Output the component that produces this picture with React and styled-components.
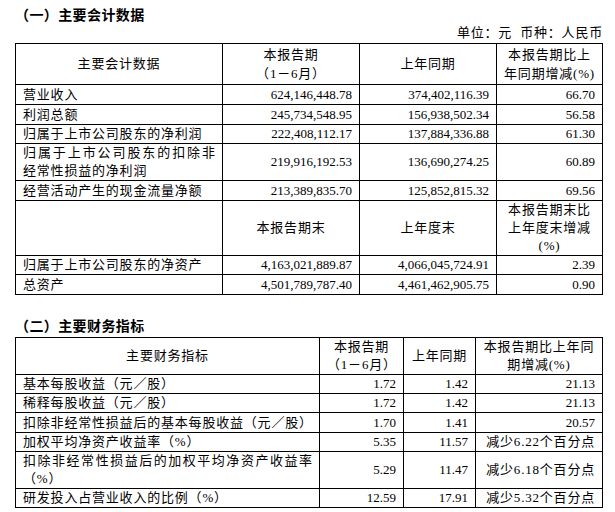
import React from "react";
import styled, { createGlobalStyle } from "styled-components";

const GlobalStyle = createGlobalStyle`
  html, body { margin: 0; padding: 0; background: #fff; }
  body { font-family: "Liberation Serif", "Noto Sans CJK SC", serif; color: #000; }
`;

const Page = styled.div`
  width: 587px;
  padding: 4px 0 0 15px;
`;

const SectionTitle = styled.h2`
  margin: ${(p) => p.$mt || 0}px 0 0 0;
  height: 20px;
  line-height: 20px;
  font-family: "Noto Sans CJK SC", sans-serif;
  font-weight: 700;
  font-size: 14px;
  letter-spacing: 0.4px;
  color: #000;
`;

const UnitLine = styled.div`
  height: 18px;
  line-height: 18px;
  text-align: right;
  font-family: "Liberation Serif", "Noto Sans CJK SC", serif;
  font-size: 13px;
  letter-spacing: 0.8px;
  margin-right: -1px;
`;

const Table = styled.table`
  width: 587px;
  margin-top: ${(p) => p.$mt || 0}px;
  border-collapse: collapse;
  table-layout: fixed;
  font-family: "Liberation Serif", "Noto Sans CJK SC", serif;
  font-size: 13px;
`;

const Row = styled.tr`
  height: ${(p) => p.$h}px;
`;

const Cell = styled.td`
  border: 1px solid #000;
  padding: 0 7px;
  vertical-align: middle;
  line-height: ${(p) => p.$lh || 18}px;
  text-align: ${(p) => p.$align || "left"};
  letter-spacing: ${(p) => (p.$num ? "0" : "0.8px")};
  white-space: nowrap;
  overflow: hidden;
  color: #000;
`;

const JustLine = styled.span`
  display: block;
  text-align: justify;
  text-align-last: justify;
  letter-spacing: 0;
`;

const Line = styled.span`
  display: block;
`;

const t1Rows = [
  { label: "营业收入", a: "624,146,448.78", b: "374,402,116.39", c: "66.70", h: 20 },
  { label: "利润总额", a: "245,734,548.95", b: "156,938,502.34", c: "56.58", h: 20 },
  { label: "归属于上市公司股东的净利润", a: "222,408,112.17", b: "137,884,336.88", c: "61.30", h: 19 },
  {
    label: ["归属于上市公司股东的扣除非", "经常性损益的净利润"],
    a: "219,916,192.53",
    b: "136,690,274.25",
    c: "60.89",
    h: 37,
  },
  { label: "经营活动产生的现金流量净额", a: "213,389,835.70", b: "125,852,815.32", c: "69.56", h: 20 },
];

const t1Rows2 = [
  { label: "归属于上市公司股东的净资产", a: "4,163,021,889.87", b: "4,066,045,724.91", c: "2.39", h: 19 },
  { label: "总资产", a: "4,501,789,787.40", b: "4,461,462,905.75", c: "0.90", h: 20 },
];

const t2Rows = [
  { label: "基本每股收益（元／股）", a: "1.72", b: "1.42", c: "21.13", h: 19 },
  { label: "稀释每股收益（元／股）", a: "1.72", b: "1.42", c: "21.13", h: 19 },
  { label: "扣除非经常性损益后的基本每股收益（元／股）", a: "1.70", b: "1.41", c: "20.57", h: 20 },
  { label: "加权平均净资产收益率（%）", a: "5.35", b: "11.57", c: "减少6.22个百分点", h: 18 },
  {
    label: ["扣除非经常性损益后的加权平均净资产收益率", "（%）"],
    a: "5.29",
    b: "11.47",
    c: "减少6.18个百分点",
    h: 37,
  },
  { label: "研发投入占营业收入的比例（%）", a: "12.59", b: "17.91", c: "减少5.32个百分点", h: 18 },
];

function Label({ value }) {
  if (Array.isArray(value)) {
    return (
      <>
        <JustLine>{value[0]}</JustLine>
        <Line>{value[1]}</Line>
      </>
    );
  }
  return value;
}

function DataRow({ r }) {
  return (
    <Row $h={r.h}>
      <Cell>
        <Label value={r.label} />
      </Cell>
      <Cell $align="right" $num>{r.a}</Cell>
      <Cell $align="right" $num>{r.b}</Cell>
      <Cell $align="right" $num={!/[\u4e00-\u9fff]/.test(r.c)}>{r.c}</Cell>
    </Row>
  );
}

export default function App() {
  return (
    <>
      <GlobalStyle />
      <Page>
        <SectionTitle>（一）主要会计数据</SectionTitle>
        <UnitLine>单位：元&nbsp;&nbsp;币种：人民币</UnitLine>
        <Table $mt={1}>
          <colgroup>
            <col style={{ width: 207 }} />
            <col style={{ width: 137 }} />
            <col style={{ width: 137 }} />
            <col style={{ width: 106 }} />
          </colgroup>
          <tbody>
            <Row $h={41}>
              <Cell $align="center">主要会计数据</Cell>
              <Cell $align="center" $lh={19}>
                <Line>本报告期</Line>
                <Line>（1－6月）</Line>
              </Cell>
              <Cell $align="center">上年同期</Cell>
              <Cell $align="center" $lh={19}>
                <Line>本报告期比上</Line>
                <Line>年同期增减(%)</Line>
              </Cell>
            </Row>
            {t1Rows.map((r, i) => (
              <DataRow key={i} r={r} />
            ))}
            <Row $h={53}>
              <Cell />
              <Cell $align="center">本报告期末</Cell>
              <Cell $align="center">上年度末</Cell>
              <Cell $align="center">
                <Line>本报告期末比</Line>
                <Line>上年度末增减</Line>
                <Line>(%)</Line>
              </Cell>
            </Row>
            {t1Rows2.map((r, i) => (
              <DataRow key={i} r={r} />
            ))}
          </tbody>
        </Table>

        <SectionTitle $mt={20}>（二）主要财务指标</SectionTitle>
        <Table $mt={2}>
          <colgroup>
            <col style={{ width: 304 }} />
            <col style={{ width: 84 }} />
            <col style={{ width: 72 }} />
            <col style={{ width: 127 }} />
          </colgroup>
          <tbody>
            <Row $h={37}>
              <Cell $align="center">主要财务指标</Cell>
              <Cell $align="center">
                <Line>本报告期</Line>
                <Line>（1－6月）</Line>
              </Cell>
              <Cell $align="center">上年同期</Cell>
              <Cell $align="center">
                <Line>本报告期比上年同</Line>
                <Line>期增减(%)</Line>
              </Cell>
            </Row>
            {t2Rows.map((r, i) => (
              <DataRow key={i} r={r} />
            ))}
          </tbody>
        </Table>
      </Page>
    </>
  );
}
